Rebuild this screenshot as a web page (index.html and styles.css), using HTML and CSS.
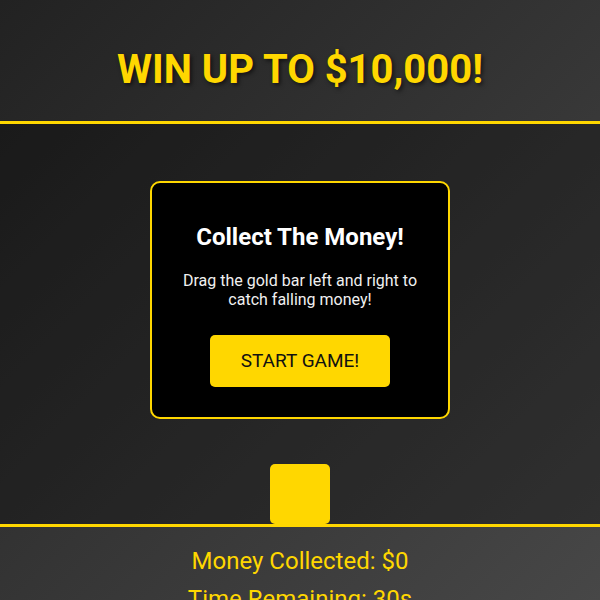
FILE: index.html
```html
<!DOCTYPE html>
<html lang="en">
<head>
<meta charset="utf-8">
<title>Collect The Money</title>
<link rel="stylesheet" href="styles.css">
</head>
<body>
  <header class="header">
    <h1 class="title">WIN UP TO $10,000!</h1>
  </header>
  <main class="game">
    <div class="bar"></div>
  </main>
  <footer class="footer">
    <div class="stat">Money Collected: $0</div>
    <div class="stat">Time Remaining: 30s</div>
  </footer>
  <div class="card">
    <h2 class="card-title">Collect The Money!</h2>
    <p class="card-text">Drag the gold bar left and right to catch falling money!</p>
    <button class="start">START GAME!</button>
  </div>
</body>
</html>
```
FILE: styles.css
```css
html, body {
  margin: 0;
  padding: 0;
}
body {
  font-family: Roboto, "Liberation Sans", Arial, sans-serif;
  background: linear-gradient(135deg, #222222 0%, #484848 100%);
  min-height: 600px;
  overflow: hidden;
  color: #fff;
}
.header {
  padding: 46px 20px 28px;
  border-bottom: 3px solid #ffd700;
  text-align: center;
}
.title {
  margin: 0;
  font-size: 40px;
  line-height: 47px;
  font-weight: 700;
  color: #ffd700;
  text-shadow: 2px 2px 4px rgba(0, 0, 0, 0.6);
}
.game {
  position: relative;
  height: 400px;
  background: rgba(0, 0, 0, 0.3);
  border-bottom: 3px solid #ffd700;
}
.bar {
  position: absolute;
  left: 270px;
  bottom: 0;
  width: 60px;
  height: 60px;
  background: #ffd700;
  border-radius: 5px;
}
.footer {
  padding: 20px;
  display: flex;
  flex-direction: column;
  gap: 10px;
  text-align: center;
}
.stat {
  font-size: 24px;
  line-height: 28px;
  color: #ffd700;
}
.card {
  position: fixed;
  left: 150px;
  top: 181px;
  width: 256px;
  padding: 20px;
  background: #000;
  border: 2px solid #ffd700;
  border-radius: 10px;
  text-align: center;
}
.card-title {
  margin: 20px 0;
  font-size: 24px;
  line-height: 28px;
  font-weight: 700;
  color: #fff;
}
.card-text {
  margin: 20px 0 16px;
  font-size: 16px;
  line-height: 19px;
  color: #f0f0f0;
}
.start {
  margin: 10px 0;
  padding: 15px 0;
  width: 180px;
  white-space: nowrap;
  font-family: Roboto, "Liberation Sans", Arial, sans-serif;
  font-size: 19px;
  line-height: 22px;
  color: #111;
  background: #ffd700;
  border: none;
  border-radius: 5px;
}
```
